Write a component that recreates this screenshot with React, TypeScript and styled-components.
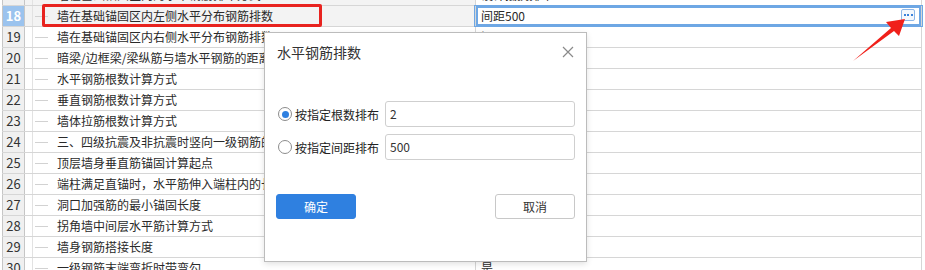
import styled, { createGlobalStyle } from 'styled-components';

const GlobalStyle = createGlobalStyle`
	html, body {
		margin: 0;
		padding: 0;
		background: #fff;
	}
	body {
		font-family: "Noto Sans CJK SC", "Noto Sans", sans-serif;
		color: #333;
	}
`;

const Page = styled.div`
	position: relative;
	width: 925px;
	height: 270px;
	overflow: hidden;
	padding-left: 2px;
	box-sizing: border-box;
	background: #fff;
`;

const Table = styled.div`
	margin-top: -15px;
	width: 920px;
`;

const Row = styled.div`
	display: grid;
	grid-template-columns: 23px 8px 442px 1fr;
	height: 21px;
	box-sizing: border-box;
	border-bottom: 1px solid #d6d6d6;
`;

const NumCell = styled.div<{ $active?: boolean }>`
	border-left: 1px solid #c6c6c6;
	border-right: 1px solid #c6c6c6;
	background: ${p => (p.$active ? '#9bc3ee' : '#f0f0f0')};
	color: ${p => (p.$active ? '#fff' : '#333')};
	font-weight: ${p => (p.$active ? 700 : 400)};
	font-size: 13px;
	line-height: 20px;
	text-align: center;
`;

const TreeCell = styled.div<{ $active?: boolean }>`
	border-right: 1px solid #e2e2e2;
	background: ${p => (p.$active ? '#f3f3f3' : '#fff')};
`;

const NameCell = styled.div<{ $active?: boolean }>`
	position: relative;
	padding-left: 24px;
	font-size: 12px;
	line-height: 20px;
	white-space: nowrap;
	color: #2a2a2a;
	background: ${p => (p.$active ? '#f3f3f3' : '#fff')};

	&::before {
		content: '';
		position: absolute;
		left: 2px;
		top: 10px;
		width: 13px;
		height: 1px;
		background: #d2d2d2;
	}
`;

const Highlight = styled.span`
	position: absolute;
	left: 9px;
	top: -2px;
	width: 280px;
	height: 23px;
	box-sizing: border-box;
	border: 3px solid #e8231f;
	border-radius: 2px;
`;

const ValueCell = styled.div<{ $active?: boolean }>`
	position: relative;
	border-left: 1px solid #d6d6d6;
	border-right: 1px solid #d6d6d6;
	padding-left: 5px;
	font-size: 12px;
	line-height: 20px;
	white-space: nowrap;
	color: #2a2a2a;
	box-shadow: ${p => (p.$active ? 'inset 0 0 0 2px #6ea7e4' : 'none')};
	outline: ${p => (p.$active ? '1px solid #6ea7e4' : 'none')};
`;

const MoreButton = styled.span`
	position: absolute;
	right: 6px;
	top: 3px;
	width: 14px;
	height: 12px;
	box-sizing: border-box;
	border: 1px solid #8db7e8;
	border-radius: 2px;
	background: #f4f8fd;
	display: flex;
	align-items: center;
	justify-content: center;
	gap: 1.5px;
`;

const Dot = styled.i`
	width: 2px;
	height: 2px;
	background: #3a82da;
`;

const Arrow = styled.svg`
	position: absolute;
	left: 845px;
	top: 15px;
`;

const Dialog = styled.div`
	position: absolute;
	left: 264px;
	top: 32px;
	width: 323px;
	height: 230px;
	box-sizing: border-box;
	border: 1px solid #bcbcbc;
	background: #fff;
	box-shadow: 0 2px 6px rgba(0, 0, 0, 0.12);
	display: flex;
	flex-direction: column;
`;

const DialogHeader = styled.div`
	display: flex;
	align-items: center;
	justify-content: space-between;
	padding: 9px 12px 0 12px;
	height: 20px;
`;

const DialogTitle = styled.span`
	font-size: 14px;
	line-height: 20px;
	color: #333;
`;

const DialogBody = styled.div`
	display: flex;
	flex-direction: column;
	gap: 7px;
	margin-top: 39px;
	padding-left: 13px;
`;

const FieldRow = styled.label`
	display: flex;
	align-items: center;
	height: 26px;
`;

const Radio = styled.span<{ $checked?: boolean }>`
	width: 14px;
	height: 14px;
	box-sizing: border-box;
	border: 1px solid #8c8c8c;
	border-radius: 50%;
	background: #fff;
	display: flex;
	align-items: center;
	justify-content: center;

	&::after {
		content: '';
		width: 7px;
		height: 7px;
		border-radius: 50%;
		background: ${p => (p.$checked ? '#2f80e0' : 'transparent')};
	}
`;

const FieldLabel = styled.span`
	width: 83px;
	margin-left: 3px;
	font-size: 12px;
	color: #222;
	white-space: nowrap;
`;

const Input = styled.div`
	margin-left: 7px;
	width: 190px;
	height: 26px;
	box-sizing: border-box;
	border: 1px solid #cfcfcf;
	border-radius: 3px;
	padding-left: 4px;
	font-size: 12px;
	line-height: 24px;
	color: #333;
`;

const DialogFooter = styled.div`
	display: flex;
	justify-content: space-between;
	margin-top: 34px;
	padding: 0 11px;
`;

const Button = styled.button<{ $primary?: boolean }>`
	width: 80px;
	height: 25px;
	box-sizing: border-box;
	border-radius: 3px;
	border: 1px solid ${p => (p.$primary ? '#2f80e0' : '#c8c8c8')};
	background: ${p => (p.$primary ? '#2f80e0' : '#fff')};
	color: ${p => (p.$primary ? '#fff' : '#333')};
	font-family: "Noto Sans CJK SC", "Noto Sans", sans-serif;
	font-size: 12px;
	padding: 0;
`;

const rows = [
	{ no: 17, name: '墙在基础锚固区内的水平钢筋排布方式', value: '设计抵抗排布' },
	{ no: 18, name: '墙在基础锚固区内左侧水平分布钢筋排数', value: '间距500' },
	{ no: 19, name: '墙在基础锚固区内右侧水平分布钢筋排数', value: '间距500' },
	{ no: 20, name: '暗梁/边框梁/梁纵筋与墙水平钢筋的距离(mm)', value: '50' },
	{ no: 21, name: '水平钢筋根数计算方式', value: '向上取整+1' },
	{ no: 22, name: '垂直钢筋根数计算方式', value: '向上取整+1' },
	{ no: 23, name: '墙体拉筋根数计算方式', value: '向上取整+1' },
	{ no: 24, name: '三、四级抗震及非抗震时竖向一级钢筋的端部是否带弯勾', value: '是' },
	{ no: 25, name: '顶层墙身垂直筋锚固计算起点', value: '从板底开始' },
	{ no: 26, name: '端柱满足直锚时，水平筋伸入端柱内的长度', value: '直锚' },
	{ no: 27, name: '洞口加强筋的最小锚固长度', value: '600' },
	{ no: 28, name: '拐角墙中间层水平筋计算方式', value: '连续通过' },
	{ no: 29, name: '墙身钢筋搭接长度', value: '按规范' },
	{ no: 30, name: '一级钢筋末端弯折时带弯勾', value: '是' },
];

const App = () => {
	const activeNo = 18;

	return (
		<Page>
			<GlobalStyle />
			<Table>
				{rows.map(row => {
					const active = row.no === activeNo;
					const shaded = row.no <= activeNo;
					return (
						<Row key={row.no}>
							<NumCell $active={active}>{row.no}</NumCell>
							<TreeCell $active={shaded} />
							<NameCell $active={shaded}>
								{row.name}
								{active && <Highlight />}
							</NameCell>
							<ValueCell $active={active}>
								{row.value}
								{active && (
									<MoreButton>
										<Dot />
										<Dot />
										<Dot />
									</MoreButton>
								)}
							</ValueCell>
						</Row>
					);
				})}
			</Table>

			<Dialog>
				<DialogHeader>
					<DialogTitle>水平钢筋排数</DialogTitle>
					<svg width="12" height="12" viewBox="0 0 12 12">
						<path d="M1 1 L11 11 M11 1 L1 11" stroke="#8a8a8a" strokeWidth="1.2" fill="none" />
					</svg>
				</DialogHeader>
				<DialogBody>
					<FieldRow>
						<Radio $checked />
						<FieldLabel>按指定根数排布</FieldLabel>
						<Input>2</Input>
					</FieldRow>
					<FieldRow>
						<Radio />
						<FieldLabel>按指定间距排布</FieldLabel>
						<Input>500</Input>
					</FieldRow>
				</DialogBody>
				<DialogFooter>
					<Button $primary>确定</Button>
					<Button>取消</Button>
				</DialogFooter>
			</Dialog>

			<Arrow width="70" height="50" viewBox="0 0 70 50">
				<polygon points="8,46 46,13 41,7 60,4 54,21 49,16" fill="#f0201a" />
			</Arrow>
		</Page>
	);
};

export default App;
